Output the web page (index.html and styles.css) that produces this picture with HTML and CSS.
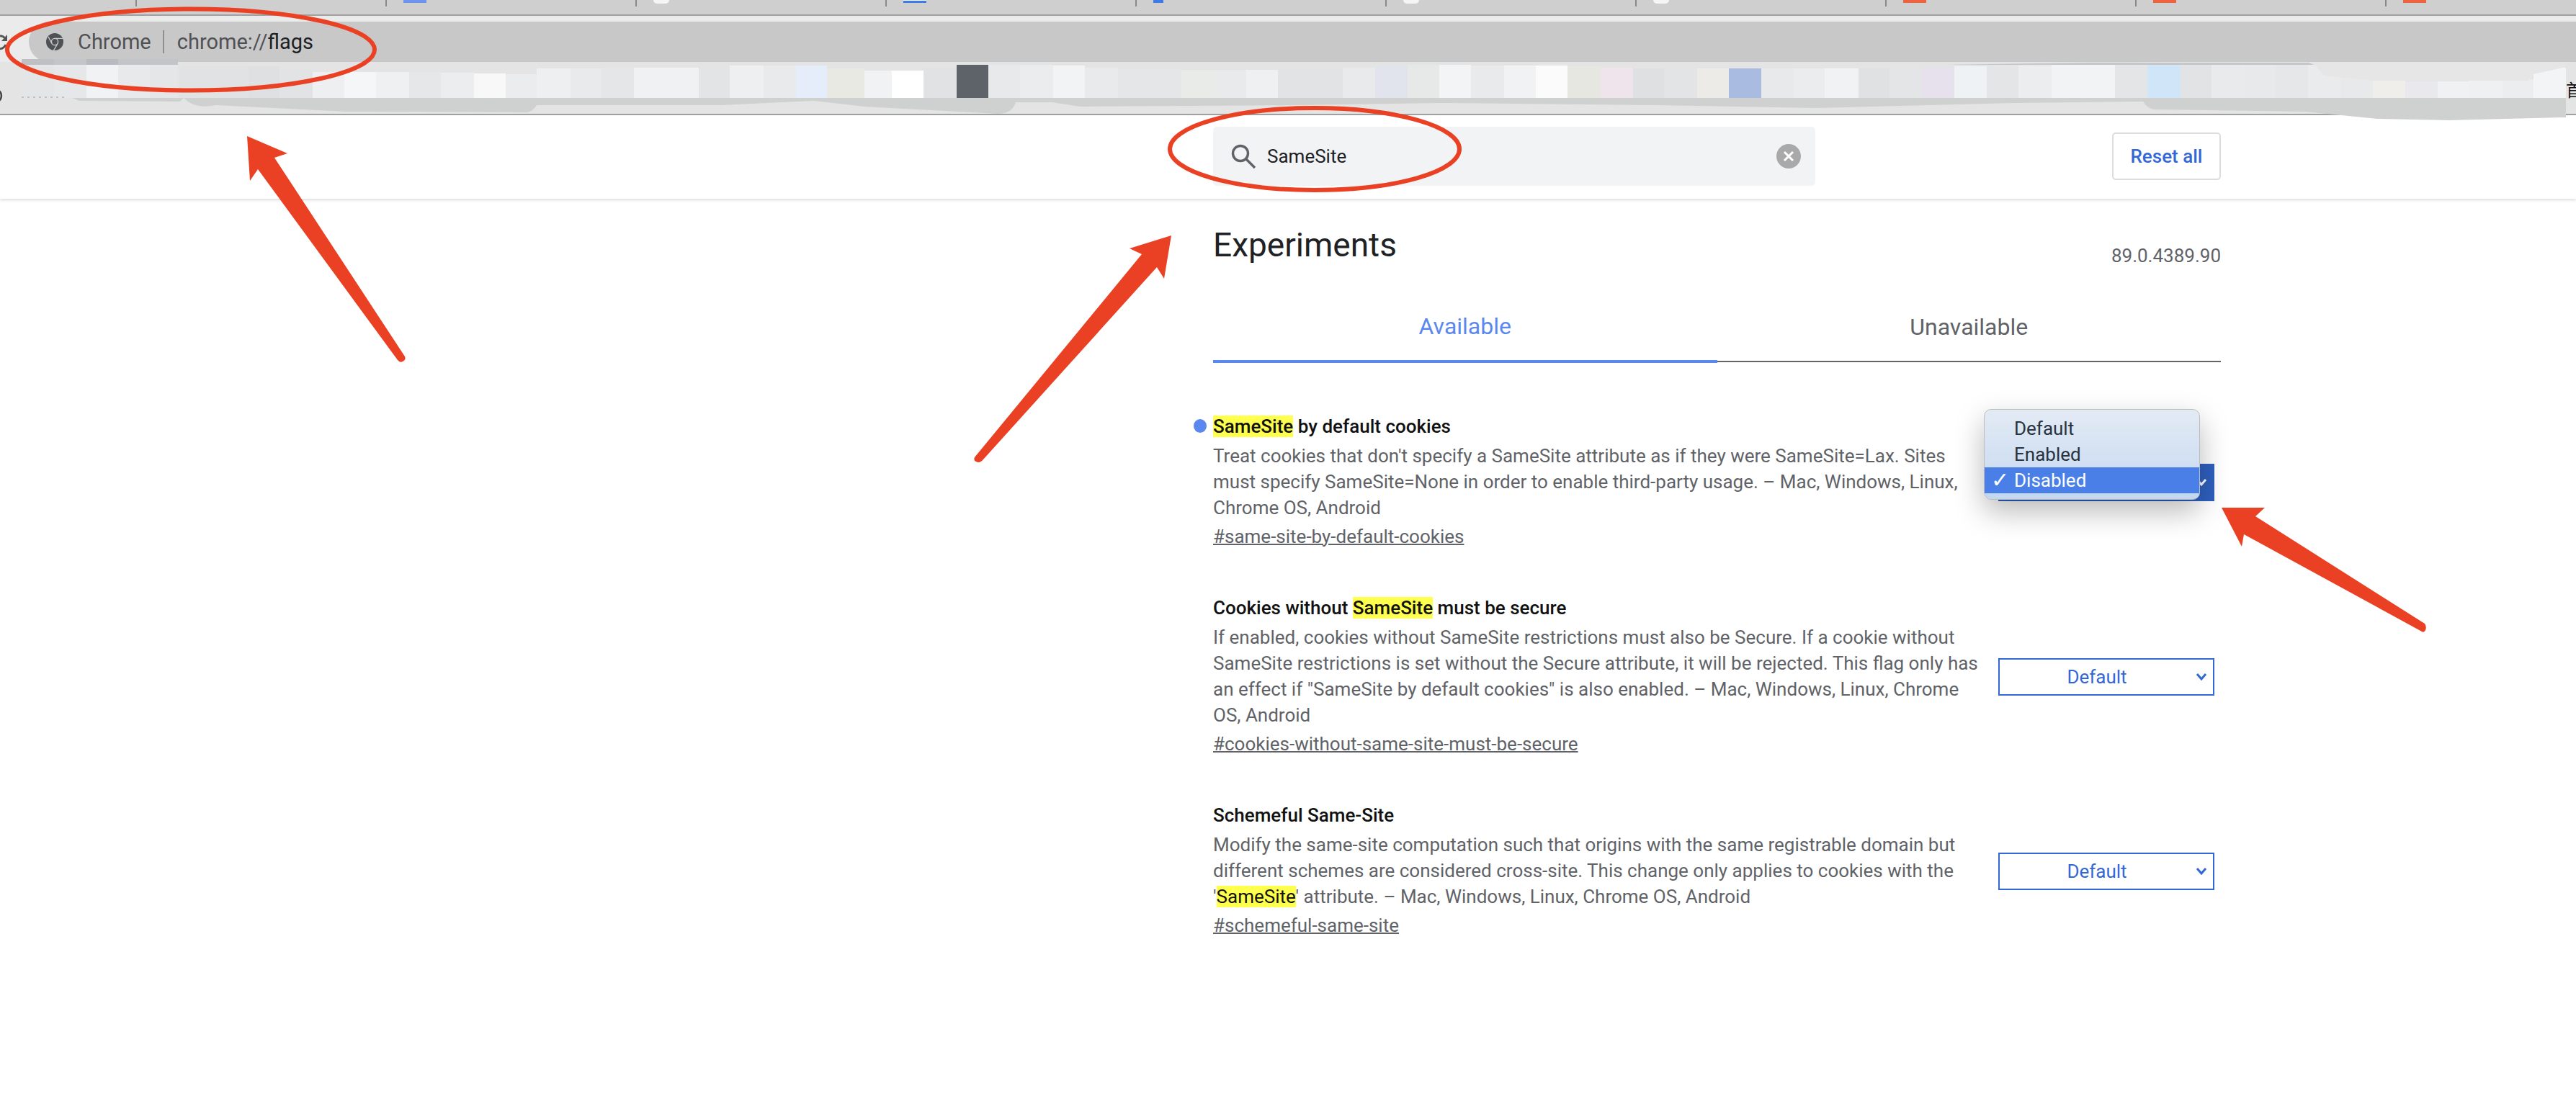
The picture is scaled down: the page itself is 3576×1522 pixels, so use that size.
FILE: index.html
```html
<!DOCTYPE html>
<html lang="en">
<head>
    <meta charset="UTF-8">
    <title>Experiments</title>
    <link rel="stylesheet" href="styles.css">
</head>
<body>
    <!-- browser frame -->
    <div class="tabstrip">
        <div class="tab tab-first"></div>
        <div class="tab"></div>
        <div class="tab"><span class="favicon fav-blue"></span></div>
        <div class="tab"><span class="favicon fav-white"></span></div>
        <div class="tab"><span class="favicon fav-blue-box"></span></div>
        <div class="tab"><span class="favicon fav-blue-small"></span></div>
        <div class="tab"><span class="favicon fav-white"></span></div>
        <div class="tab"><span class="favicon fav-white"></span></div>
        <div class="tab"><span class="favicon fav-red"></span></div>
        <div class="tab"><span class="favicon fav-red"></span></div>
        <div class="tab tab-last"><span class="favicon fav-red"></span></div>
    </div>

    <div class="toolbar">
        <svg class="reload-icon" width="12" height="26" viewBox="0 0 12 26">
            <path d="M-4 5 A9 9 0 0 1 7 7 L9 9 M8 16 A9 9 0 0 1 -4 21" fill="none" stroke="#555" stroke-width="3"/>
            <path d="M10 2 V11 H2 Z" fill="#555"/>
        </svg>
        <div class="omnibox">
            <svg class="chrome-icon" width="24" height="24" viewBox="0 0 24 24">
                <circle cx="12" cy="12" r="12" fill="#4e5155"/>
                <circle cx="12" cy="12" r="4.6" fill="#4e5155" stroke="#c8c8c8" stroke-width="1.4"/>
                <path d="M12 7.4 H23 M8 14.3 L3 5 M16 14.3 L10.5 24" stroke="#c8c8c8" stroke-width="1.4" fill="none"/>
            </svg>
            <span class="origin">Chrome</span>
            <span class="omnibox-sep"></span>
            <span class="url">chrome://<b>flags</b></span>
        </div>
    </div>

    <div class="bookmarks">
        <svg class="bookmark-blur" width="3576" height="72" viewBox="0 86 3576 72">
            <g>
                <rect x="30" y="82" width="45" height="8" fill="#bfc0c4"/>
                <rect x="75" y="82" width="45" height="8" fill="#c4c5c8"/>
                <rect x="120" y="82" width="44" height="8" fill="#b9babf"/>
                <rect x="164" y="82" width="83" height="8" fill="#c3c4c7"/>
                <rect x="30" y="90" width="45" height="46" fill="#e4e5e6"/>
                <rect x="75" y="90" width="45" height="46" fill="#e6e7e8"/>
                <rect x="120" y="90" width="44" height="46" fill="#f1f2f3"/>
                <rect x="164" y="90" width="44" height="46" fill="#e8e9ea"/>
                <rect x="208" y="90" width="39" height="46" fill="#e5e6e7"/>
                <rect x="250" y="92" width="95" height="44" fill="#e1e2e4"/>
                <rect x="345" y="92" width="43" height="44" fill="#dfe0e2"/>
                <rect x="388" y="96" width="46" height="40" fill="#e2e3e5"/>
                <rect x="434" y="100" width="44" height="36" fill="#eeeff0"/>
                <rect x="478" y="100" width="44" height="36" fill="#f5f6f7"/>
                <rect x="522" y="100" width="46" height="36" fill="#eff0f1"/>
                <rect x="568" y="100" width="44" height="36" fill="#e6e7e8"/>
                <rect x="612" y="101" width="46" height="35" fill="#ecedee"/>
                <rect x="658" y="102" width="44" height="34" fill="#f8f8f9"/>
                <rect x="702" y="103" width="43" height="33" fill="#ebeced"/>
                <rect x="745" y="95" width="47" height="41" fill="#eeeff0"/>
                <rect x="792" y="95" width="43" height="41" fill="#e9eaeb"/>
                <rect x="835" y="95" width="45" height="41" fill="#e5e6e7"/>
                <rect x="880" y="94" width="90" height="42" fill="#f0f1f2"/>
                <rect x="970" y="92" width="43" height="44" fill="#e3e4e5"/>
                <rect x="1013" y="91" width="47" height="45" fill="#eeeff0"/>
                <rect x="1060" y="91" width="45" height="45" fill="#e9eaeb"/>
                <rect x="1105" y="91" width="43" height="45" fill="#e5edfa"/>
                <rect x="1148" y="95" width="52" height="41" fill="#e8e9e3"/>
                <rect x="1200" y="98" width="38" height="38" fill="#f1f2f3"/>
                <rect x="1238" y="98" width="44" height="38" fill="#ffffff"/>
                <rect x="1282" y="94" width="46" height="42" fill="#e1e2e3"/>
                <rect x="1328" y="90" width="44" height="46" fill="#5e6369"/>
                <rect x="1372" y="90" width="44" height="46" fill="#e8e9ea"/>
                <rect x="1416" y="90" width="46" height="46" fill="#ebeced"/>
                <rect x="1462" y="91" width="44" height="45" fill="#f2f3f4"/>
                <rect x="1506" y="94" width="46" height="42" fill="#e9eaeb"/>
                <rect x="1552" y="96" width="88" height="40" fill="#e5e6e8"/>
                <rect x="1640" y="97" width="46" height="39" fill="#e9ebe9"/>
                <rect x="1686" y="97" width="44" height="39" fill="#e9eaeb"/>
                <rect x="1730" y="97" width="44" height="39" fill="#eff0f1"/>
                <rect x="1774" y="96" width="90" height="40" fill="#e2e3e4"/>
                <rect x="1864" y="94" width="45" height="42" fill="#e9eaeb"/>
                <rect x="1909" y="92" width="45" height="44" fill="#e1e4ec"/>
                <rect x="1954" y="90" width="44" height="46" fill="#e7e8e8"/>
                <rect x="1998" y="90" width="44" height="46" fill="#f3f4f5"/>
                <rect x="2042" y="91" width="46" height="45" fill="#e9eaeb"/>
                <rect x="2088" y="91" width="44" height="45" fill="#f1f2f3"/>
                <rect x="2132" y="91" width="44" height="45" fill="#fbfbfc"/>
                <rect x="2176" y="92" width="46" height="44" fill="#e5e7e0"/>
                <rect x="2222" y="94" width="45" height="42" fill="#efe3ec"/>
                <rect x="2267" y="95" width="43" height="41" fill="#dfe0e2"/>
                <rect x="2310" y="95" width="46" height="41" fill="#e3e4e6"/>
                <rect x="2356" y="95" width="44" height="41" fill="#ecebe7"/>
                <rect x="2400" y="95" width="45" height="41" fill="#a9bbe0"/>
                <rect x="2445" y="95" width="45" height="41" fill="#e8e9ea"/>
                <rect x="2490" y="95" width="43" height="41" fill="#ebeced"/>
                <rect x="2533" y="95" width="47" height="41" fill="#f1f2f3"/>
                <rect x="2580" y="95" width="43" height="41" fill="#e0e1e2"/>
                <rect x="2623" y="95" width="45" height="41" fill="#e4e5e6"/>
                <rect x="2668" y="94" width="45" height="42" fill="#e7e0ed"/>
                <rect x="2713" y="92" width="45" height="44" fill="#eef2f4"/>
                <rect x="2758" y="91" width="44" height="45" fill="#e4e5e6"/>
                <rect x="2802" y="91" width="46" height="45" fill="#ecedee"/>
                <rect x="2848" y="90" width="88" height="46" fill="#f2f3f4"/>
                <rect x="2936" y="90" width="45" height="46" fill="#e4e5e6"/>
                <rect x="2981" y="90" width="46" height="46" fill="#d0e5f7"/>
                <rect x="3027" y="90" width="43" height="46" fill="#e2e3e4"/>
                <rect x="3070" y="90" width="45" height="46" fill="#e9eaeb"/>
                <rect x="3115" y="90" width="44" height="46" fill="#e8e9ea"/>
                <rect x="3159" y="90" width="45" height="46" fill="#e6e7e8"/>
                <rect x="3204" y="90" width="45" height="46" fill="#eaebec"/>
                <rect x="3249" y="90" width="45" height="46" fill="#e8e9ea"/>
                <rect x="3294" y="112" width="45" height="24" fill="#f0eeea"/>
                <rect x="3339" y="113" width="45" height="23" fill="#e9e8ec"/>
                <rect x="3384" y="113" width="43" height="23" fill="#f0f1f2"/>
                <rect x="3427" y="112" width="47" height="24" fill="#eff0f1"/>
                <rect x="3474" y="110" width="43" height="26" fill="#ecedee"/>
                <rect x="3517" y="94" width="45" height="42" fill="#f3f4f5"/>
            </g>
            <!-- smudges painted over the bookmark names -->
            <path d="M2800 90 L3000 86 H3210 L3226 105 L3294 112 H3510 L3517 103 L3562 93 V86 H3212 L3205 90 Z" fill="#e6e6e6"/>
            <path d="M2700 90 L2900 87 H3205 L3212 90 Z" fill="#c6c6c8"/>
            <path d="M100 136 H3562 V163 L3400 167 L3300 165 L3200 155 L2990 152 Q2980 150 2975 141 L2800 143 L2520 150 L2300 146 L2000 143 L1800 146 L1500 148 L1460 142 H1410 Q1405 158 1385 158 L1200 148 L1130 140 L1000 146 H745 Q738 158 725 156 L480 155 L300 146 Q270 152 255 136 L250 141 L110 140 Z" fill="#cfd1d0"/>
            <path d="M-6 125 A9 9 0 0 1 -6 141" transform="translate(3 0)" fill="none" stroke="#444" stroke-width="2.5"/>
            <path d="M30 135 H90" stroke="#c2c2c2" stroke-width="2" stroke-dasharray="3 5"/>
        </svg>
        <span class="bookmark-clip">首</span>
    </div>

    <!-- flags page -->
    <header class="page-header">
        <div class="header-inner">
            <div class="search-box">
                <svg class="search-icon" width="36" height="36" viewBox="0 0 36 36">
                    <circle cx="14" cy="14" r="10.5" fill="none" stroke="#5f6368" stroke-width="3.4"/>
                    <path d="M21.5 21.5 L34 34" stroke="#5f6368" stroke-width="3.4"/>
                </svg>
                <span class="search-text">SameSite</span>
                <svg class="clear-icon" width="34" height="34" viewBox="0 0 34 34">
                    <circle cx="17" cy="17" r="17" fill="#a9a9aa"/>
                    <path d="M11 11 L23 23 M23 11 L11 23" stroke="#fff" stroke-width="3"/>
                </svg>
            </div>
            <button class="reset-btn">Reset all</button>
        </div>
    </header>

    <main class="content">
        <div class="title-row">
            <h1>Experiments</h1>
            <span class="version">89.0.4389.90</span>
        </div>

        <div class="tabs">
            <div class="tab-title active">Available</div>
            <div class="tab-title">Unavailable</div>
        </div>

        <section class="flag">
            <div class="flag-text">
                <h2 class="flag-name modified"><mark>SameSite</mark> by default cookies</h2>
                <p class="flag-desc">Treat cookies that don't specify a SameSite attribute as if they were SameSite=Lax. Sites must specify SameSite=None in order to enable third-party usage. – Mac, Windows, Linux, Chrome OS, Android</p>
                <a class="flag-link">#same-site-by-default-cookies</a>
            </div>
            <div class="select open">
                <span>Disabled</span>
                <svg class="chevron" width="16" height="12" viewBox="0 0 16 12"><path d="M2 2 L8 9 L14 2" fill="none" stroke="#fff" stroke-width="3"/></svg>
                <div class="popup">
                    <div class="popup-item">Default</div>
                    <div class="popup-item">Enabled</div>
                    <div class="popup-item selected"><span class="check">✓</span>Disabled</div>
                </div>
            </div>
        </section>

        <section class="flag">
            <div class="flag-text">
                <h2 class="flag-name">Cookies without <mark>SameSite</mark> must be secure</h2>
                <p class="flag-desc">If enabled, cookies without SameSite restrictions must also be Secure. If a cookie without SameSite restrictions is set without the Secure attribute, it will be rejected. This flag only has an effect if "SameSite by default cookies" is also enabled. – Mac, Windows, Linux, Chrome OS, Android</p>
                <a class="flag-link">#cookies-without-same-site-must-be-secure</a>
            </div>
            <div class="select">
                <span>Default</span>
                <svg class="chevron" width="16" height="12" viewBox="0 0 16 12"><path d="M2 2 L8 9 L14 2" fill="none" stroke="#3367d6" stroke-width="3"/></svg>
            </div>
        </section>

        <section class="flag">
            <div class="flag-text">
                <h2 class="flag-name">Schemeful Same-Site</h2>
                <p class="flag-desc">Modify the same-site computation such that origins with the same registrable domain but different schemes are considered cross-site. This change only applies to cookies with the '<mark>SameSite</mark>' attribute. – Mac, Windows, Linux, Chrome OS, Android</p>
                <a class="flag-link">#schemeful-same-site</a>
            </div>
            <div class="select">
                <span>Default</span>
                <svg class="chevron" width="16" height="12" viewBox="0 0 16 12"><path d="M2 2 L8 9 L14 2" fill="none" stroke="#3367d6" stroke-width="3"/></svg>
            </div>
        </section>
    </main>

    <!-- red markup drawn on top of the screenshot -->
    <svg class="annotations" width="3576" height="1522" viewBox="0 0 3576 1522">
        <ellipse cx="265" cy="69" rx="255" ry="56.5" fill="none" stroke="#ea4125" stroke-width="6"/>
        <ellipse cx="1825" cy="207" rx="201" ry="57" fill="none" stroke="#ea4125" stroke-width="6"/>
        <path d="M343 189 L399 213 L381 219 L562 495 Q564 500 559 502 Q555 504 552 500 L358 235 L347 251 Z" fill="#ea4125"/>
        <path d="M1626 327 L1568 345 L1585 353 L1353 635 Q1351 639 1355 641 Q1360 644 1365 638 L1606 371 L1616 387 Z" fill="#ea4125"/>
        <path d="M3084 705 L3144 705 L3131 717 L3366 866 Q3369 870 3367 875 Q3365 879 3362 877 L3115 742 L3112 759 Z" fill="#ea4125"/>
    </svg>
</body>
</html>
```

FILE: styles.css
```css
* {
    box-sizing: border-box;
}
html, body {
    margin: 0;
    padding: 0;
}
body {
    position: relative;
    width: 3576px;
    height: 1522px;
    overflow: hidden;
    background-color: white;
    font-family: Roboto, "Liberation Sans", sans-serif;
    font-size: 26px;
    color: #5f6368;
}

/* browser frame */
.tabstrip {
    display: flex;
    height: 22px;
    background-color: #cfcfcf;
    border-bottom: 2px solid #a0a0a0;
}
.tab {
    flex: none;
    width: 347px;
    height: 9px;
    padding-left: 23px;
    border-right: 2px solid #8a8a8a;
    overflow: hidden;
}
.tab-first {
    width: 190px;
}
.tab-last {
    border-right: none;
}
.favicon {
    display: block;
    width: 32px;
    height: 4px;
}
.fav-red {
    background-color: #ee6240;
}
.fav-blue {
    background-color: #6d93ee;
}
.fav-blue-box {
    background-color: white;
    border-bottom: 3px solid #3f7be8;
}
.fav-blue-small {
    width: 14px;
    background-color: #3f7be8;
}
.fav-white {
    width: 22px;
    height: 5px;
    border-radius: 0 0 11px 11px;
    background-color: #f5f5f5;
}
.toolbar {
    display: flex;
    align-items: center;
    height: 64px;
    padding: 8px 0 0 0;
    background-color: #ebebeb;
}
.reload-icon {
    flex: none;
    margin-top: 2px;
    margin-right: 28px;
}
.omnibox {
    display: flex;
    flex: 1;
    align-items: center;
    height: 56px;
    padding-left: 24px;
    background-color: #c8c8c8;
    border-radius: 28px 0 0 28px;
    font-size: 29px;
    color: #505154;
}
.chrome-icon {
    flex: none;
    margin-right: 20px;
}
.omnibox-sep {
    width: 2px;
    height: 32px;
    margin: 0 18px 0 16px;
    background-color: #8f8f8f;
}
.url b {
    font-weight: 400;
    color: #202124;
}
.bookmarks {
    position: relative;
    height: 74px;
    background-color: #e4e4e4;
    border-bottom: 2px solid #a0a0a0;
}
.bookmark-blur {
    display: block;
    overflow: visible;
}
.bookmark-clip {
    position: absolute;
    left: 3562px;
    top: 24px;
    width: 14px;
    overflow: hidden;
    font-family: "Noto Sans CJK SC", sans-serif;
    font-size: 24px;
    line-height: 28px;
    white-space: nowrap;
    color: #111;
}

/* search header */
.page-header {
    height: 116px;
    background-color: white;
    box-shadow: 0 2px 4px rgba(0,0,0,0.14);
}
.header-inner {
    display: flex;
    align-items: center;
    justify-content: space-between;
    width: 1399px;
    height: 114px;
    margin-left: 1684px;
}
.search-box {
    display: flex;
    align-items: center;
    width: 836px;
    height: 82px;
    padding: 0 20px 0 24px;
    background-color: #f1f3f4;
    border-radius: 5px;
}
.search-icon {
    flex: none;
    margin-right: 15px;
}
.search-text {
    flex: 1;
    color: #202124;
}
.clear-icon {
    flex: none;
}
.reset-btn {
    width: 151px;
    height: 66px;
    padding: 0;
    background-color: white;
    border: 2px solid #dadce0;
    border-radius: 5px;
    font-family: Roboto, sans-serif;
    font-size: 26px;
    font-weight: 500;
    color: #3367d6;
}

/* experiments list */
.content {
    width: 1399px;
    margin-left: 1684px;
}
.title-row {
    display: flex;
    justify-content: space-between;
    height: 126px;
    padding-top: 37px;
}
h1 {
    margin: 0;
    font-size: 46px;
    font-weight: 400;
    line-height: 54px;
    color: #202124;
}
.version {
    margin-top: 27px;
    font-size: 26px;
    line-height: 30px;
}
.tabs {
    display: flex;
    height: 102px;
}
.tab-title {
    flex: 1;
    padding-top: 33px;
    border-bottom: 2px solid #666;
    margin-bottom: 1px;
    text-align: center;
    font-size: 32px;
    line-height: 38px;
    color: #5f6368;
}
.tab-title.active {
    padding-top: 32px;
    margin-bottom: 0;
    border-bottom: 4px solid #5a88ee;
    color: #5a88ee;
}
.flag {
    display: flex;
    align-items: center;
    justify-content: space-between;
    padding-right: 9px;
    padding-top: 72px;
}
.flag + .flag {
    padding-top: 65px;
}
.flag-text {
    width: 1072px;
}
.flag-name {
    position: relative;
    margin: 0 0 7px;
    font-size: 26px;
    font-weight: 500;
    line-height: 32px;
    color: #111;
}
.flag-name.modified::before {
    content: "";
    position: absolute;
    left: -27px;
    top: 6px;
    width: 18px;
    height: 19px;
    border-radius: 50%;
    background-color: #5a88ee;
}
mark {
    background-color: #ffff4d;
    color: #111;
}
.flag-desc {
    margin: 0 0 4px;
    line-height: 36px;
}
.flag-link {
    display: inline-block;
    line-height: 36px;
    text-decoration: underline;
    text-decoration-thickness: 2px;
}
.select {
    position: relative;
    display: flex;
    flex: none;
    align-items: center;
    justify-content: center;
    width: 300px;
    height: 52px;
    padding-right: 26px;
    border: 2px solid #3367d6;
    color: #3367d6;
}
.select.open {
    background-color: #2f60bf;
    border-color: #2f60bf;
    color: white;
}
.chevron {
    position: absolute;
    right: 8px;
    top: 18px;
}
.popup {
    position: absolute;
    left: -22px;
    top: -78px;
    width: 300px;
    padding: 8px 0;
    background: linear-gradient(#e3ebf4, #c3d7f1);
    border: 1px solid #bdbdbd;
    border-radius: 10px;
    box-shadow: 0 16px 40px rgba(0,0,0,0.28);
    color: #27333f;
}
.popup-item {
    height: 36px;
    padding-left: 41px;
    line-height: 36px;
}
.popup-item.selected {
    position: relative;
    background-color: #4a7fe8;
    color: white;
}
.check {
    position: absolute;
    left: 9px;
    font-family: "DejaVu Sans", sans-serif;
    font-size: 30px;
}
.annotations {
    position: absolute;
    left: 0;
    top: 0;
    pointer-events: none;
}
```
